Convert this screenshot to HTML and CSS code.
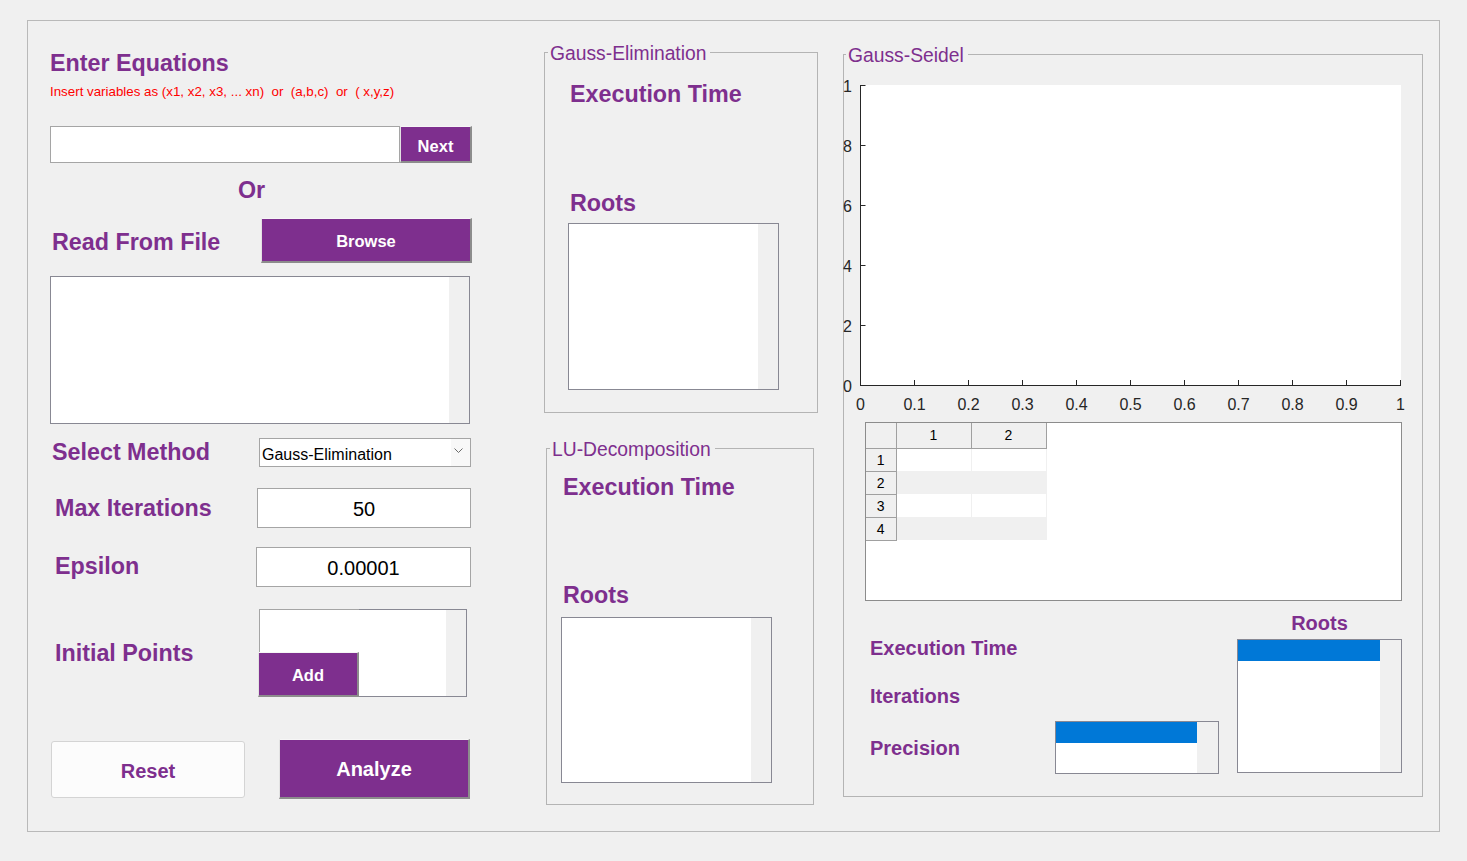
FILE: index.html
```html
<!DOCTYPE html>
<html>
<head>
<meta charset="utf-8">
<title>Linear Systems Solver</title>
<link rel="stylesheet" href="styles.css">
</head>
<body>
<div class="window">
  <div class="left">
    <h1 class="h-enter">Enter Equations</h1>
    <div class="hint">Insert variables as (x1, x2, x3, ... xn)  or  (a,b,c)  or  ( x,y,z)</div>
    <div class="eq-row">
      <input class="eq-input" type="text" value="">
      <button class="btn btn-next">Next</button>
    </div>
    <div class="or">Or</div>
    <div class="file-row">
      <span class="lbl lbl-file">Read From File</span>
      <button class="btn btn-browse">Browse</button>
    </div>
    <div class="listbox file-box"><div class="lb-body"></div><div class="lb-scroll"></div></div>
    <div class="field-row row-method">
      <span class="lbl">Select Method</span>
      <div class="dropdown">
        <span class="dd-text">Gauss-Elimination</span>
        <span class="dd-arrow"><svg width="9" height="6" viewBox="0 0 9 6"><polyline points="0.5,0.5 4.5,4.5 8.5,0.5" fill="none" stroke="#6b6b6b" stroke-width="1"/></svg></span>
      </div>
    </div>
    <div class="field-row row-max">
      <span class="lbl">Max Iterations</span>
      <input class="num-input in-max" type="text" value="50">
    </div>
    <div class="field-row row-eps">
      <span class="lbl">Epsilon</span>
      <input class="num-input in-eps" type="text" value="0.00001">
    </div>
    <div class="field-row row-init">
      <span class="lbl">Initial Points</span>
      <div class="init-widget">
        <div class="init-col">
          <div class="init-input"></div>
          <button class="btn btn-add">Add</button>
        </div>
        <div class="listbox init-list"><div class="lb-body"></div><div class="lb-scroll"></div></div>
      </div>
    </div>
    <div class="action-row">
      <button class="btn-reset">Reset</button>
      <button class="btn btn-analyze">Analyze</button>
    </div>
  </div>

  <div class="mid">
    <fieldset class="panel panel-ge">
      <legend>Gauss-Elimination</legend>
      <div class="panel-body body-ge">
        <div class="lbl exec-ge">Execution Time</div>
        <div class="lbl roots-ge">Roots</div>
        <div class="listbox roots-list roots-list-ge"><div class="lb-body"></div><div class="lb-scroll"></div></div>
      </div>
    </fieldset>
    <fieldset class="panel panel-lu">
      <legend>LU-Decomposition</legend>
      <div class="panel-body body-lu">
        <div class="lbl exec-lu">Execution Time</div>
        <div class="lbl roots-lu">Roots</div>
        <div class="listbox roots-list roots-list-lu"><div class="lb-body"></div><div class="lb-scroll"></div></div>
      </div>
    </fieldset>
  </div>

  <fieldset class="panel panel-gs">
    <legend>Gauss-Seidel</legend>
    <svg class="chart" width="562" height="342" viewBox="0 0 562 342">
      <rect x="16" y="10" width="541" height="300" fill="#ffffff"/>
      <g stroke="#262626" stroke-width="1" fill="none">
        <line x1="16.5" y1="10" x2="16.5" y2="311"/>
        <line x1="16" y1="310.5" x2="557" y2="310.5"/>
        <line x1="16.5" y1="10.5" x2="21.5" y2="10.5"/>
        <line x1="16.5" y1="70.5" x2="21.5" y2="70.5"/>
        <line x1="16.5" y1="130.5" x2="21.5" y2="130.5"/>
        <line x1="16.5" y1="190.5" x2="21.5" y2="190.5"/>
        <line x1="16.5" y1="250.5" x2="21.5" y2="250.5"/>
        <line x1="70.5" y1="305" x2="70.5" y2="310"/>
        <line x1="124.5" y1="305" x2="124.5" y2="310"/>
        <line x1="178.5" y1="305" x2="178.5" y2="310"/>
        <line x1="232.5" y1="305" x2="232.5" y2="310"/>
        <line x1="286.5" y1="305" x2="286.5" y2="310"/>
        <line x1="340.5" y1="305" x2="340.5" y2="310"/>
        <line x1="394.5" y1="305" x2="394.5" y2="310"/>
        <line x1="448.5" y1="305" x2="448.5" y2="310"/>
        <line x1="502.5" y1="305" x2="502.5" y2="310"/>
        <line x1="556.5" y1="305" x2="556.5" y2="310"/>
      </g>
      <g class="tick-text" text-anchor="end">
        <text x="8" y="16.5">1</text>
        <text x="8" y="76.5">8</text>
        <text x="8" y="136.5">6</text>
        <text x="8" y="196.5">4</text>
        <text x="8" y="256.5">2</text>
        <text x="8" y="316.5">0</text>
      </g>
      <g class="tick-text" text-anchor="middle">
        <text x="16.5" y="335">0</text>
        <text x="70.5" y="335">0.1</text>
        <text x="124.5" y="335">0.2</text>
        <text x="178.5" y="335">0.3</text>
        <text x="232.5" y="335">0.4</text>
        <text x="286.5" y="335">0.5</text>
        <text x="340.5" y="335">0.6</text>
        <text x="394.5" y="335">0.7</text>
        <text x="448.5" y="335">0.8</text>
        <text x="502.5" y="335">0.9</text>
        <text x="556.5" y="335">1</text>
      </g>
    </svg>

    <div class="table-box">
      <table class="grid">
        <tr class="hdr"><th class="corner"></th><th class="col">1</th><th class="col">2</th></tr>
        <tr class="odd"><th class="rh">1</th><td></td><td></td></tr>
        <tr class="even"><th class="rh">2</th><td></td><td></td></tr>
        <tr class="odd"><th class="rh">3</th><td></td><td></td></tr>
        <tr class="even"><th class="rh">4</th><td></td><td></td></tr>
      </table>
    </div>

    <div class="gs-bottom">
      <div class="gs-labels">
        <div class="lbl2 gs-exec">Execution Time</div>
        <div class="lbl2 gs-iter">Iterations</div>
        <div class="lbl2 gs-prec">Precision</div>
      </div>
      <div class="listbox prec-list"><div class="lb-body"><div class="sel"></div></div><div class="lb-scroll wide"></div></div>
      <div class="gs-roots">
        <div class="lbl2 gs-roots-title">Roots</div>
        <div class="listbox gs-roots-list"><div class="lb-body"><div class="sel"></div></div><div class="lb-scroll wide"></div></div>
      </div>
    </div>
  </fieldset>
</div>
</body>
</html>
```

FILE: styles.css
```css
* { box-sizing: border-box; }

body {
  margin: 0;
  background: #f0f0f0;
  font-family: "Liberation Sans", Arial, sans-serif;
}

.window {
  margin: 20px 0 0 27px;
  width: 1413px;
  height: 812px;
  border: 1px solid #b9b9b9;
  display: flex;
  align-items: flex-start;
}

/* ---------- left column ---------- */
.left {
  margin-left: 22px;
  width: 422px;
  display: flex;
  flex-direction: column;
}

.lbl {
  color: #7e2f8e;
  font-weight: bold;
  font-size: 23.3px;
  line-height: 26px;
  white-space: nowrap;
}

.h-enter {
  margin: 29px 0 0 0;
  font-size: 23.3px;
  line-height: 26px;
  font-weight: bold;
  color: #7e2f8e;
}

.hint {
  margin: 8px 0 0 0;
  font-size: 13.33px;
  line-height: 16px;
  color: #ff0000;
  white-space: pre;
}

.eq-row {
  margin: 26px 0 0 0;
  display: flex;
  height: 37px;
}

.eq-input {
  width: 350px;
  height: 37px;
  margin: 0;
  padding: 0;
  border: 1px solid #a5a5a5;
  background: #fff;
  outline: none;
}

.btn {
  font-family: "Liberation Sans", Arial, sans-serif;
  font-weight: bold;
  color: #fff;
  background: #7e2f8e;
  margin: 0;
  padding: 2px 0 0 0;
  border-style: solid;
  border-width: 1px 2px 2px 1px;
  border-color: #f6f6f6 #8c8c8c #8c8c8c #e2e2e2;
  cursor: pointer;
}

.btn-next {
  width: 72px;
  height: 37px;
  font-size: 16.5px;
  padding-top: 4px;
}

.or {
  margin: 14px 0 0 188px;
  font-size: 23.3px;
  line-height: 26px;
  font-weight: bold;
  color: #7e2f8e;
}

.file-row {
  margin: 15px 0 0 2px;
  display: flex;
  justify-content: space-between;
  align-items: flex-start;
  height: 45px;
}

.lbl-file { margin-top: 11px; }

.btn-browse {
  width: 211px;
  height: 45px;
  font-size: 16.5px;
}

/* listbox generic */
.listbox {
  border: 1px solid #888893;
  background: #fff;
  display: flex;
}
.lb-body { flex: 1; }
.lb-scroll {
  width: 20px;
  background: #f0f0f0;
}
.lb-scroll.wide { width: 21px; }

.file-box {
  margin: 13px 0 0 0;
  width: 420px;
  height: 148px;
}

/* field rows */
.field-row {
  display: flex;
  justify-content: space-between;
  align-items: flex-start;
}

.row-method {
  margin: 14px 1px 0 2px;
  height: 29px;
}
.row-method .lbl { margin-top: 1px; }

.dropdown {
  width: 212px;
  height: 29px;
  border: 1px solid #a5a5a5;
  background: #fff;
  display: flex;
  align-items: center;
  padding: 4px 0 0 2px;
  font-size: 16px;
  color: #000;
}
.dd-text { flex: 1; }
.dd-arrow {
  width: 19px;
  height: 27px;
  margin-top: -4px;
  display: flex;
  align-items: center;
  justify-content: flex-start;
  padding: 0 0 3px 3px;
  background: #f8f8f8;
}
.dd-arrow svg { display: block; }

.row-max {
  margin: 21px 1px 0 5px;
  height: 40px;
}
.row-max .lbl { margin-top: 7px; }

.num-input {
  height: 40px;
  margin: 0;
  padding: 2px 0 0 0;
  border: 1px solid #a5a5a5;
  background: #fff;
  font-family: "Liberation Sans", Arial, sans-serif;
  font-size: 20px;
  color: #000;
  text-align: center;
  outline: none;
}
.in-max { width: 214px; }
.in-eps { width: 215px; }

.row-eps {
  margin: 19px 1px 0 5px;
  height: 40px;
}
.row-eps .lbl { margin-top: 6px; }

.row-init {
  margin: 22px 1px 0 5px;
  height: 88px;
  align-items: center;
}

.init-widget {
  display: flex;
  margin-right: 4px;
  height: 88px;
}
.init-col {
  width: 101px;
  display: flex;
  flex-direction: column;
}
.init-input {
  height: 43px;
  margin-left: 1px;
  background: #fff;
  border-top: 1px solid #a5a5a5;
  border-left: 1px solid #a5a5a5;
}
.btn-add {
  height: 45px;
  width: 101px;
  font-size: 16.5px;
}
.init-list {
  width: 108px;
  height: 88px;
  border-left: none;
}

.action-row {
  margin: 42px 0 0 1px;
  display: flex;
  align-items: flex-start;
}

.btn-reset {
  margin: 2px 0 0 0;
  width: 194px;
  height: 57px;
  padding: 3px 0 0 0;
  background: #fcfcfc;
  border: 1px solid #d4d4d4;
  border-radius: 3px;
  font-family: "Liberation Sans", Arial, sans-serif;
  font-weight: bold;
  font-size: 20px;
  color: #7e2f8e;
}

.btn-analyze {
  margin-left: 34px;
  width: 191px;
  height: 60px;
  font-size: 20px;
}

/* ---------- middle column ---------- */
.mid {
  margin-left: 72px;
  width: 274px;
  display: flex;
  flex-direction: column;
}

.panel {
  margin: 0;
  padding: 0;
  min-width: 0;
  border: 1px solid #b4b4b4;
}
.panel legend {
  font-size: 19.3px;
  line-height: 22px;
  padding: 3px 4px 0 2px;
  margin-left: 3px;
  color: #7e2f8e;
  font-weight: normal;
  white-space: nowrap;
}

.panel-body {
  display: flex;
  flex-direction: column;
}

.panel-ge {
  margin-top: 19px;
  width: 274px;
  height: 373px;
}
.body-ge { padding-left: 23px; }
.exec-ge { margin: 16px 0 0 2px; }
.roots-ge { margin: 83px 0 0 2px; }
.roots-list {
  width: 211px;
}
.roots-list-ge {
  margin-top: 7px;
  height: 167px;
}

.panel-lu {
  margin: 23px 0 0 2px;
  width: 268px;
  height: 369px;
}
.body-lu { padding-left: 14px; }
.exec-lu { margin: 13px 0 0 2px; }
.roots-lu { margin: 82px 0 0 2px; }
.roots-list-lu {
  margin-top: 9px;
  height: 166px;
}

/* ---------- right panel ---------- */
.panel-gs {
  margin: 21px 0 0 25px;
  width: 580px;
  height: 755px;
}
.panel-gs legend { margin-left: 2px; }

.chart {
  display: block;
  margin-top: 8px;
  overflow: visible;
}
.tick-text text {
  font-family: "Liberation Sans", Arial, sans-serif;
  font-size: 16px;
  fill: #262626;
}

.table-box {
  margin: 5px 0 0 21px;
  width: 537px;
  height: 179px;
  border: 1px solid #8c8c8c;
  background: #fff;
}

.grid {
  border-collapse: collapse;
  font-family: "Liberation Sans", Arial, sans-serif;
  font-size: 14px;
  color: #000;
}
.grid th, .grid td {
  padding: 0;
  margin: 0;
}
.grid th {
  background: #f0f0f0;
  font-weight: normal;
  text-align: center;
  border-right: 1px solid #a0a0a0;
  border-bottom: 1px solid #a0a0a0;
}
.grid .corner { width: 30px; }
.grid .col { width: 75px; }
.grid .hdr th { height: 25px; }
.grid .rh { height: 23px; }
.grid td { border-right: 1px solid #f0f0f0; }
.grid tr.odd td { background: #fff; }
.grid tr.even td { background: #f0f0f0; }

.gs-bottom {
  display: flex;
  margin-left: 26px;
  align-items: flex-start;
}

.lbl2 {
  color: #7e2f8e;
  font-weight: bold;
  font-size: 20px;
  line-height: 23px;
  white-space: nowrap;
}

.gs-labels {
  width: 185px;
  display: flex;
  flex-direction: column;
  margin-top: 36px;
}
.gs-iter { margin-top: 25px; }
.gs-prec { margin-top: 29px; }

.prec-list {
  margin-top: 120px;
  width: 164px;
  height: 53px;
}

.sel {
  height: 21px;
  background: #0078d7;
}

.gs-roots {
  margin-left: 18px;
  width: 165px;
  display: flex;
  flex-direction: column;
}
.gs-roots-title {
  margin-top: 11px;
  text-align: center;
}
.gs-roots-list {
  margin-top: 4px;
  height: 134px;
}
```
